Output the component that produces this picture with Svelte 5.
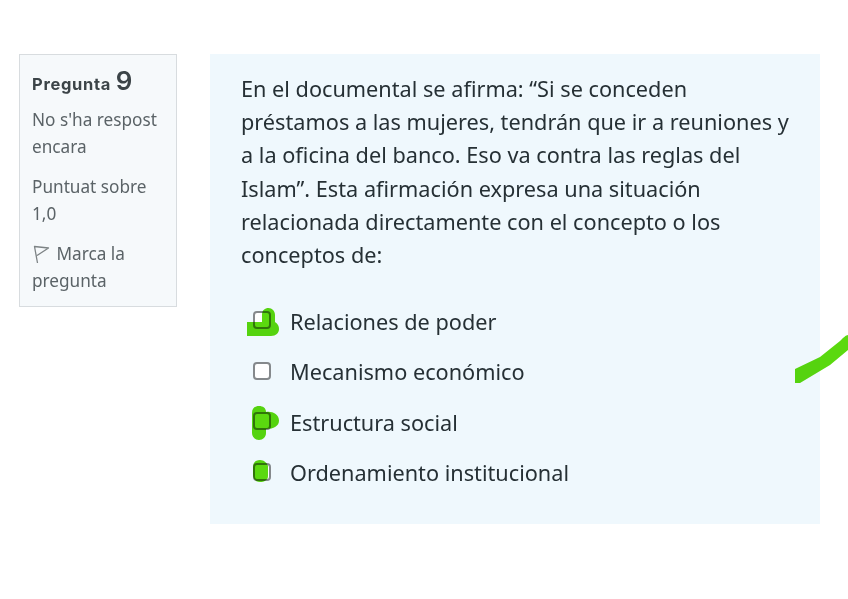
<script>
  const options = ['Relaciones de poder', 'Mecanismo económico', 'Estructura social', 'Ordenamiento institucional'];
</script>

<main class="page">
  <aside class="info">
    <h3 class="title">Pregunta <span class="num">9</span></h3>
    <p>No s'ha respost encara</p>
    <p>Puntuat sobre 1,0</p>
    <p class="flag">
      <svg class="flag-icon" viewBox="0 0 18 20" width="18" height="20" aria-hidden="true">
        <path d="M5.5 19 L2.5 2.5 L16.5 4 L5 11.5" fill="none" stroke="#7d8385" stroke-width="1.3" stroke-linejoin="round" />
      </svg>
      Marca la pregunta
    </p>
  </aside>
  <section class="content">
    <p class="question">En el documental se afirma: “Si se conceden préstamos a las mujeres, tendrán que ir a reuniones y a la oficina del banco. Eso va contra las reglas del Islam”. Esta afirmación expresa una situación relacionada directamente con el concepto o los conceptos de:</p>
    <ul class="options">
      {#each options as o}
        <li><span class="box"></span><span>{o}</span></li>
      {/each}
    </ul>
  </section>
  <svg class="ink" width="848" height="599" viewBox="0 0 848 599" aria-hidden="true">
    <g fill="#5bd90f">
      <path d="M247 322 H262 V315 C262 310 265 308 268.500 308 C272 308 275 311 275 315 V322 C278 324 279 326 279 329 C279 333 276 336 271 336 H247 Z" />
      <path d="M252 413 C252 408 255 406 259 406 C263 406 266 408 266 412 C272 411 279 414 279 420.500 C279 426 274 429 266 429 V433 C266 437 263 440 259 440 C255 440 252 437 252 433 Z" />
      <path d="M253 467 C253 462 256 460 260 460 C264 460 267 463 268 466 V476 C268 480 264 482 260 482 C256 482 253 479 253 475 Z" />
      <path d="M795 369 L820 357 L840 341 C843 338 846 335 848 335 V350 L830 365 L800 383 H795 Z" />
    </g>
  </svg>
</main>

<style>
  :global(body) { margin: 0; background: #fff; }
  .page {
    position: relative;
    width: 848px;
    height: 599px;
    box-sizing: border-box;
    padding: 54px 28px 0 19px;
    display: flex;
    align-items: flex-start;
    gap: 33px;
    font-family: "Noto Sans", "Open Sans", sans-serif;
    overflow: hidden;
  }
  .info {
    width: 158px;
    height: 253px;
    box-sizing: border-box;
    flex: none;
    padding: 12px 11px 0 12px;
    background: #f6f9fb;
    border: 1px solid #d8dcdf;
    color: #5b6367;
    font-size: 17.2px;
    line-height: 27px;
  }
  .title {
    margin: 0 0 8px;
    font-size: 16.5px;
    font-weight: 700;
    line-height: 28px;
    letter-spacing: 0.7px;
    color: #3c4448;
    font-family: "Inter", sans-serif;
  }
  .num { font-size: 26px; font-weight: 600; letter-spacing: 0; }
  .info p { margin: 0 0 13px; }
  .flag-icon { vertical-align: -4px; margin-right: 2px; }
  .content {
    width: 610px;
    height: 470px;
    box-sizing: border-box;
    flex: none;
    padding: 18px 30px 0 31px;
    background: #eff8fd;
    color: #263035;
    font-size: 21.7px;
    line-height: 33.2px;
  }
  .question { margin: 0 0 25px; }
  .options { list-style: none; margin: 0; padding: 0; }
  .options li {
    display: flex;
    align-items: center;
    gap: 19px;
    height: 50.4px;
    margin-left: -31px;
    padding-left: 43px;
  }
  .box {
    width: 18px;
    height: 18px;
    box-sizing: border-box;
    border: 2px solid #85898c;
    border-radius: 4px;
    background: #fff;
    flex: none;
    margin-top: -2px;
  }
  .ink { position: absolute; left: 0; top: 0; pointer-events: none; mix-blend-mode: multiply; }
</style>
